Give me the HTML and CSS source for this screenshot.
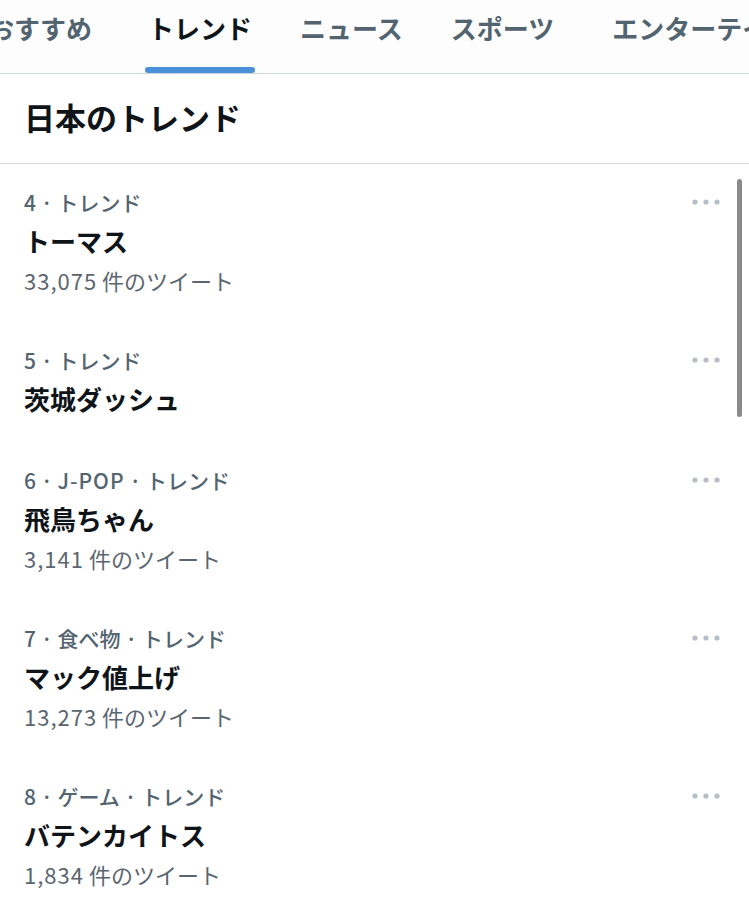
FILE: index.html
```html
<!DOCTYPE html>
<html lang="ja">
<head>
    <meta charset="UTF-8">
    <meta name="viewport" content="width=device-width, initial-scale=1.0">
    <title>トレンド</title>
    <link rel="stylesheet" href="styles.css">
</head>
<body>
    <div class="page">
        <nav class="tabs">
            <div class="tab-row">
                <a class="tab">おすすめ</a>
                <a class="tab active">トレンド</a>
                <a class="tab">ニュース</a>
                <a class="tab">スポーツ</a>
                <a class="tab">エンターテインメント</a>
            </div>
        </nav>

        <header class="section-head">
            <h2>日本のトレンド</h2>
        </header>

        <ul class="trends">
            <li class="trend">
                <div class="trend-body">
                    <div class="trend-meta">4 · トレンド</div>
                    <div class="trend-name">トーマス</div>
                    <div class="trend-count"><span class="num">33,075</span> 件のツイート</div>
                </div>
                <button class="more" aria-label="その他">
                    <svg width="28" height="8" viewBox="0 0 28 8"><circle cx="3" cy="4" r="2.6"/><circle cx="14" cy="4" r="2.6"/><circle cx="25" cy="4" r="2.6"/></svg>
                </button>
            </li>
            <li class="trend">
                <div class="trend-body">
                    <div class="trend-meta">5 · トレンド</div>
                    <div class="trend-name">茨城ダッシュ</div>
                </div>
                <button class="more" aria-label="その他">
                    <svg width="28" height="8" viewBox="0 0 28 8"><circle cx="3" cy="4" r="2.6"/><circle cx="14" cy="4" r="2.6"/><circle cx="25" cy="4" r="2.6"/></svg>
                </button>
            </li>
            <li class="trend">
                <div class="trend-body">
                    <div class="trend-meta">6 · <span class="latin">J-POP</span> · トレンド</div>
                    <div class="trend-name">飛鳥ちゃん</div>
                    <div class="trend-count"><span class="num">3,141</span> 件のツイート</div>
                </div>
                <button class="more" aria-label="その他">
                    <svg width="28" height="8" viewBox="0 0 28 8"><circle cx="3" cy="4" r="2.6"/><circle cx="14" cy="4" r="2.6"/><circle cx="25" cy="4" r="2.6"/></svg>
                </button>
            </li>
            <li class="trend">
                <div class="trend-body">
                    <div class="trend-meta">7 · 食べ物 · トレンド</div>
                    <div class="trend-name">マック値上げ</div>
                    <div class="trend-count"><span class="num">13,273</span> 件のツイート</div>
                </div>
                <button class="more" aria-label="その他">
                    <svg width="28" height="8" viewBox="0 0 28 8"><circle cx="3" cy="4" r="2.6"/><circle cx="14" cy="4" r="2.6"/><circle cx="25" cy="4" r="2.6"/></svg>
                </button>
            </li>
            <li class="trend">
                <div class="trend-body">
                    <div class="trend-meta">8 · ゲーム · トレンド</div>
                    <div class="trend-name">バテンカイトス</div>
                    <div class="trend-count"><span class="num">1,834</span> 件のツイート</div>
                </div>
                <button class="more" aria-label="その他">
                    <svg width="28" height="8" viewBox="0 0 28 8"><circle cx="3" cy="4" r="2.6"/><circle cx="14" cy="4" r="2.6"/><circle cx="25" cy="4" r="2.6"/></svg>
                </button>
            </li>
        </ul>

        <div class="scrollbar"></div>
    </div>
</body>
</html>
```

FILE: styles.css
```css
/* Reset */
* {
    box-sizing: border-box;
    margin: 0;
    padding: 0;
}

body {
    font-family: "Noto Sans CJK JP", "Noto Sans", sans-serif;
    background-color: #fff;
    color: #0f1419;
    overflow: hidden;
}

.page {
    position: relative;
    width: 749px;
    height: 920px;
    overflow: hidden;
}

/* Tabs */
.tabs {
    height: 74px;
    background-color: #fdfdfe;
    border-bottom: 1px solid #cfd4d9;
    overflow: hidden;
}

.tab-row {
    display: flex;
    margin-left: -36px;
    white-space: nowrap;
}

.tab {
    position: relative;
    height: 73px;
    padding: 10px 24px 0;
    font-size: 26px;
    line-height: 36px;
    font-weight: 700;
    color: #536471;
}

.tab:first-child {
    padding-right: 32px;
}

.tab:last-child {
    padding-left: 34px;
}

.tab.active {
    color: #0f1419;
}

.tab.active::after {
    content: "";
    position: absolute;
    left: 21px;
    right: 21px;
    bottom: 0;
    height: 6px;
    border-radius: 3px;
    background-color: #4a90d9;
}

/* Section heading */
.section-head {
    padding: 23px 24px 26px;
    border-bottom: 1px solid #d3d7db;
}

.section-head h2 {
    font-size: 31px;
    line-height: 40px;
    font-weight: 700;
}

/* Trend list */
.trends {
    list-style: none;
}

.trend {
    display: flex;
    justify-content: space-between;
    align-items: flex-start;
    padding: 19px 29px 23px 24px;
}

.trend-meta {
    font-size: 21px;
    line-height: 38px;
    font-weight: 500;
    color: #536471;
}

.trend-meta .latin {
    letter-spacing: 1px;
}

.trend-name {
    font-size: 26px;
    line-height: 40px;
    font-weight: 700;
    color: #0f1419;
}

.trend-count {
    font-size: 22px;
    line-height: 38px;
    color: #5b6670;
}

.trend-count .num {
    letter-spacing: 1px;
}

.more {
    margin-top: 15px;
    border: none;
    background: none;
    line-height: 0;
    fill: #b6bec6;
}

.scrollbar {
    position: absolute;
    top: 179px;
    right: 7px;
    width: 5px;
    height: 238px;
    border-radius: 3px;
    background-color: #8a8a8a;
}
```
